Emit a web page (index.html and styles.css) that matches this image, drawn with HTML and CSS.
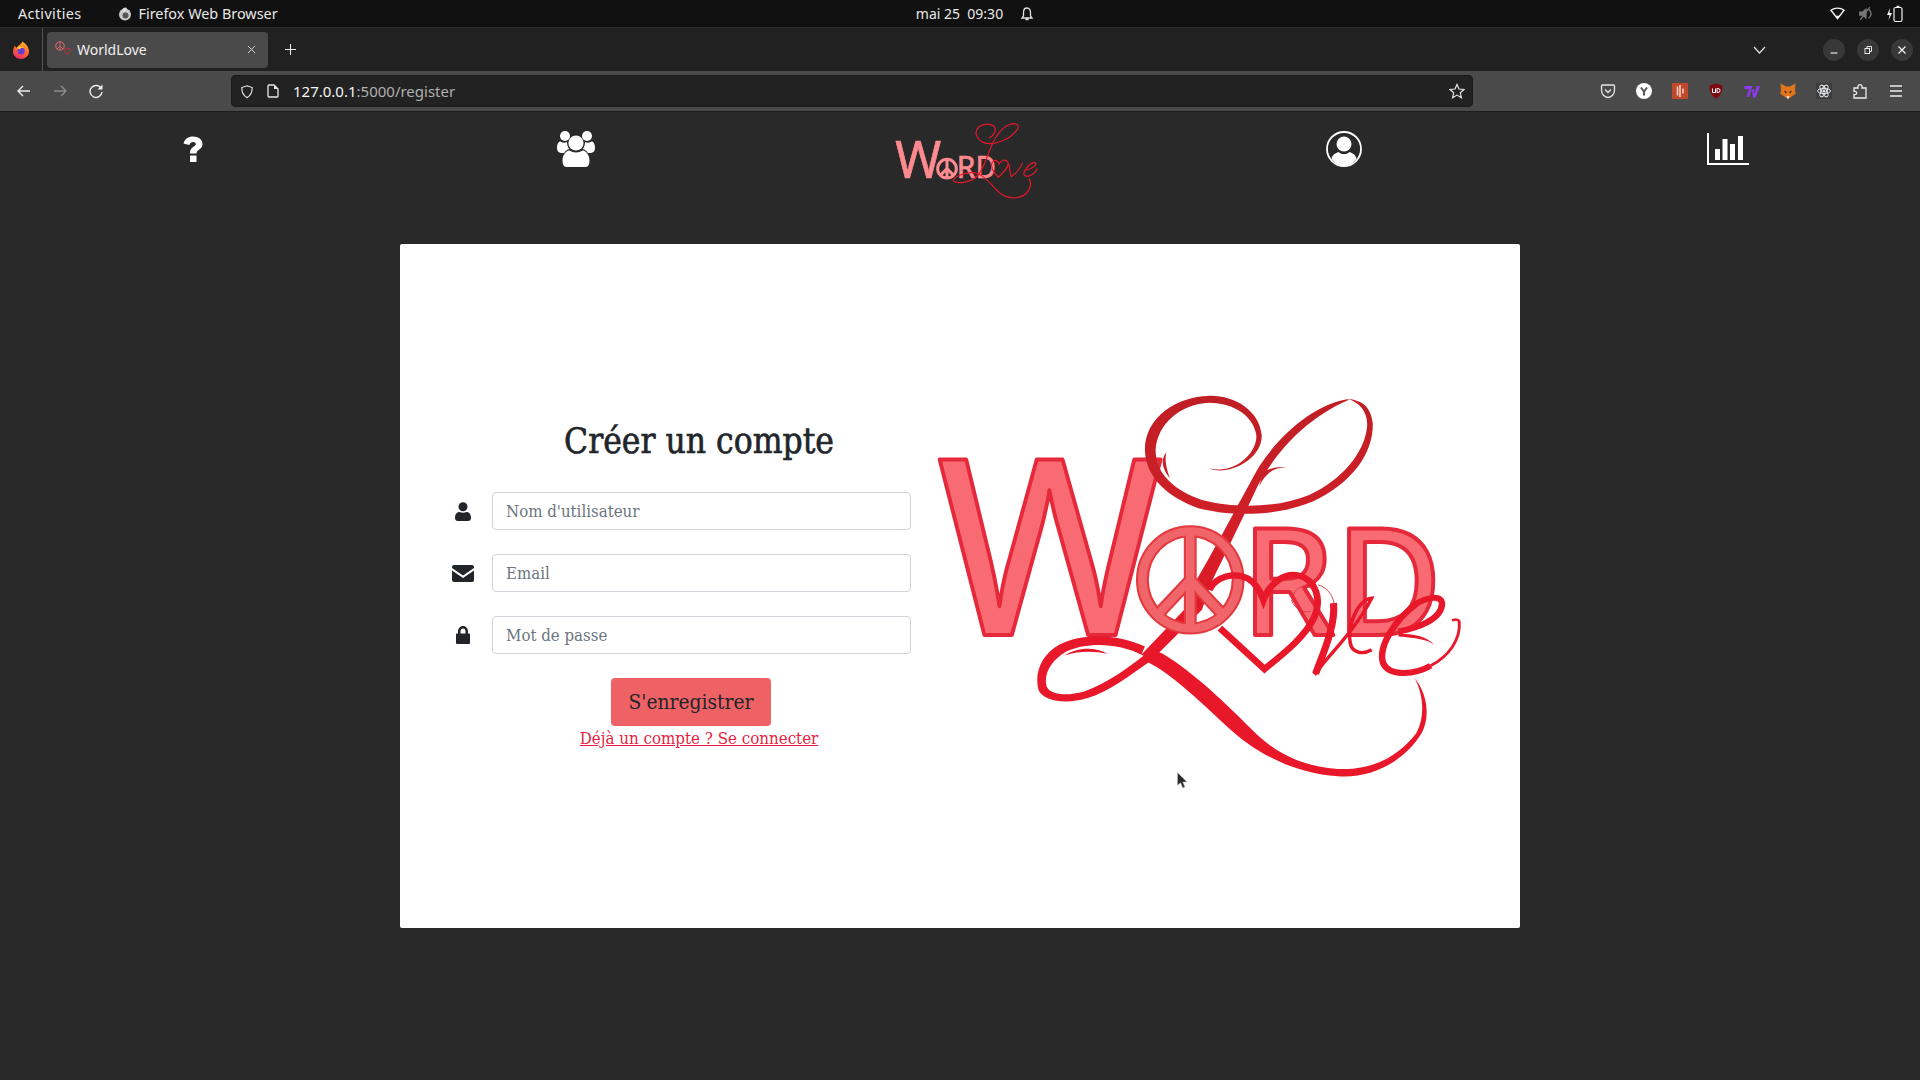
FILE: index.html
```html
<!DOCTYPE html>
<html lang="fr">
<head>
<meta charset="utf-8">
<title>WorldLove</title>
<link rel="stylesheet" href="styles.css">
</head>
<body>
<header class="os-bar">
  <div class="os-left">
    <span class="os-activities">Activities</span>
    <span class="os-app">
      <svg class="os-fox" viewBox="0 0 14 14"><circle cx="7" cy="7.5" r="6" fill="#c9c9c9"/><circle cx="7.5" cy="8.5" r="3" fill="#555"/><path d="M4 3 C6 0 8 0 9 2 L6 5Z" fill="#ddd"/></svg>
      Firefox Web Browser
    </span>
  </div>
  <div class="os-clock">
    <span>mai 25&nbsp; 09:30</span>
    <svg class="os-bell" viewBox="0 0 14 16"><path d="M7 2 C4.5 2 3.5 4 3.5 6.5 V10 L2 12 H12 L10.5 10 V6.5 C10.5 4 9.5 2 7 2Z M5.5 13.5 H8.5" fill="none" stroke="#e0e0e0" stroke-width="1.3"/></svg>
  </div>
  <div class="os-tray">
    <svg class="tray-w" viewBox="0 0 16 16"><path d="M1 4.5 C5 1.5 11 1.5 15 4.5 L8 13.5Z" fill="none" stroke="#f2f2f2" stroke-width="1.5"/><path d="M6 10.5 L8 13.5 L10 10.5Z" fill="#f2f2f2"/></svg>
    <svg class="tray-s" viewBox="0 0 16 16"><path d="M2 6 H5 L9 2.5 V13.5 L5 10 H2Z" fill="#777"/><path d="M11 4 C14 6.5 14 10 11 12.5 M3 14 L12 2" fill="none" stroke="#777" stroke-width="1.3"/></svg>
    <svg class="tray-b" viewBox="0 0 18 18"><path d="M4 3 L1 10 H3.5 L2.5 15 L6 8 H3.5Z" fill="#f2f2f2"/><rect x="8" y="2.5" width="8" height="14" rx="1.5" fill="none" stroke="#f2f2f2" stroke-width="1.2"/><rect x="10.5" y="0.8" width="3" height="1.7" fill="#f2f2f2"/></svg>
  </div>
</header>

<div class="tabs-bar">
  <div class="ff-slot">
    <svg class="ff-logo" viewBox="0 0 16 18">
      <defs><linearGradient id="ffg" x1="0.7" y1="0" x2="0.3" y2="1"><stop offset="0" stop-color="#ffb02e"/><stop offset=".5" stop-color="#ff6a2a"/><stop offset="1" stop-color="#ee2a6c"/></linearGradient></defs>
      <path d="M9.5 0.5 C13 3 16 6 16 10.5 C16 14.8 12.5 18 8 18 C3.5 18 0 14.8 0 10.5 C0 8 1 6 2 4.8 C2.5 6 3 6.5 3.8 6.8 C5 4 7.5 4 9.5 0.5Z" fill="url(#ffg)"/>
      <circle cx="8.2" cy="10" r="3.6" fill="#6a3ddb"/>
      <path d="M4 6.5 C6 5 9 5 11 6.8 C9 6.3 7 7 7 8.3 C5.5 8 4.5 7.5 4 6.5Z" fill="#ffcf3a"/>
    </svg>
  </div>
  <div class="tab">
    <svg class="tab-fav" viewBox="0 0 17 14"><circle cx="5" cy="5" r="4.2" fill="none" stroke="#e86b72" stroke-width="1"/><path d="M5 1 V9 M5 5 L2 8 M5 5 L8 8" stroke="#e86b72" stroke-width=".8"/><path d="M9 9 C9 7 11.2 7 12 8.6 C12.8 7 15.5 7 15.5 9 C15.5 11 13 12.5 12 13.5 C11 12.5 9 11 9 9Z" fill="none" stroke="#d5303a" stroke-width=".9"/></svg>
    <span class="tab-title">WorldLove</span>
    <svg class="tab-x" viewBox="0 0 10 10"><path d="M1 1 L9 9 M9 1 L1 9" stroke="#ddd" stroke-width="1"/></svg>
  </div>
  <svg class="new-tab" viewBox="0 0 12 12"><path d="M6 0 V12 M0 6 H12" stroke="#e8e8e8" stroke-width="1.2"/></svg>
  <div class="tabs-spacer"></div>
  <svg class="tab-list" viewBox="0 0 13 8"><path d="M1 1 L6.5 7 L12 1" fill="none" stroke="#e0e0e0" stroke-width="1.2"/></svg>
  <div class="win-btns">
    <span class="win-btn"><svg viewBox="0 0 10 10"><path d="M1.5 8 H8.5" stroke="#e8e8e8" stroke-width="1.2"/></svg></span>
    <span class="win-btn"><svg viewBox="0 0 10 10"><rect x="2" y="3.5" width="4.5" height="5" fill="none" stroke="#e8e8e8"/><path d="M4 3 V1.5 H8.5 V6.5 H7" fill="none" stroke="#e8e8e8"/></svg></span>
    <span class="win-btn"><svg viewBox="0 0 10 10"><path d="M1.5 1.5 L8.5 8.5 M8.5 1.5 L1.5 8.5" stroke="#f2f2f2" stroke-width="1.2"/></svg></span>
  </div>
</div>

<div class="nav-bar">
  <div class="nav-arrows">
    <svg class="tb-i" viewBox="0 0 16 16"><path d="M14 8 H2 M7 3 L2 8 L7 13" fill="none" stroke="#efefef" stroke-width="1.4"/></svg>
    <svg class="tb-i" viewBox="0 0 16 16"><path d="M2 8 H14 M9 3 L14 8 L9 13" fill="none" stroke="#8c8c8c" stroke-width="1.4"/></svg>
    <svg class="tb-i" viewBox="0 0 16 16"><path d="M13.5 6 A6 6 0 1 0 14 9" fill="none" stroke="#efefef" stroke-width="1.4"/><path d="M14.5 1.5 V6.5 H9.5Z" fill="#efefef"/></svg>
  </div>
  <div class="url-bar">
    <svg class="url-i" viewBox="0 0 16 16"><path d="M8 1.5 L14 3.5 C14 9 12 13 8 15 C4 13 2 9 2 3.5Z" fill="none" stroke="#e8e8e8" stroke-width="1.3"/></svg>
    <svg class="url-page" viewBox="0 0 12 14"><path d="M1 2 Q1 1 2 1 H7 L11 5 V12 Q11 13 10 13 H2 Q1 13 1 12Z" fill="none" stroke="#e8e8e8" stroke-width="1.3"/><path d="M7 1 V5 H11Z" fill="#e8e8e8"/></svg>
    <span class="url-text"><b>127.0.0.1</b>:5000/register</span>
    <svg class="url-star" viewBox="0 0 16 16"><path d="M8 1.5 L10 6 L15 6.5 L11.3 9.8 L12.4 14.7 L8 12.1 L3.6 14.7 L4.7 9.8 L1 6.5 L6 6Z" fill="none" stroke="#e8e8e8" stroke-width="1.2"/></svg>
  </div>
  <div class="ext-row">
    <svg class="ext" viewBox="0 0 16 16"><path d="M1.5 3 Q1.5 2 2.5 2 H13.5 Q14.5 2 14.5 3 V7 C14.5 11 11.5 14.5 8 14.5 C4.5 14.5 1.5 11 1.5 7Z" fill="none" stroke="#e8e8e8" stroke-width="1.3"/><path d="M5 6.5 L8 9.5 L11 6.5" fill="none" stroke="#e8e8e8" stroke-width="1.3"/></svg>
    <svg class="ext" viewBox="0 0 16 16"><circle cx="8" cy="8" r="8" fill="#fff"/><path d="M5 4.5 L8 8.5 L11 4.5 M8 8.5 V12.5" fill="none" stroke="#555" stroke-width="2"/></svg>
    <svg class="ext" viewBox="0 0 16 16"><rect width="16" height="16" rx="1" fill="#c2482b"/><path d="M5.5 3.5 V12.5 M8 2 V14 M11 5.5 V10.5" stroke="#f4d8cf" stroke-width="1.5"/></svg>
    <svg class="ext" viewBox="0 0 16 16"><path d="M8 0.5 L14.5 2.5 C14.5 9 12.5 13 8 15.5 C3.5 13 1.5 9 1.5 2.5Z" fill="#7e0a10"/><path d="M4.5 5.5 V9.5 H7.5 V5.5 M9 5.5 V9.5 H10 Q12 9.5 12 7.5 Q12 5.5 10 5.5Z" fill="none" stroke="#fff" stroke-width="1"/></svg>
    <svg class="ext" viewBox="0 0 16 16"><path d="M0 3 H8.5 L5 14 H2.5 L5 6 H1Z M8 6.5 H10 L10.8 11 L12.5 3 H16 L11.5 14.5 H9Z" fill="#8a3cf0"/></svg>
    <svg class="ext" viewBox="0 0 16 16"><path d="M0.5 0.5 L6 3.5 H10 L15.5 0.5 L15 7 L15.8 10.5 L11 14 L8 16 L5 14 L0.2 10.5 L1 7Z" fill="#e2761b"/><path d="M4 7.5 L7 9 L5.5 10.5Z M12 7.5 L9 9 L10.5 10.5Z" fill="#3a2a20"/><path d="M6.5 13 H9.5 L8.8 15.5 H7.2Z" fill="#e4dcd2"/></svg>
    <svg class="ext" viewBox="0 0 16 16"><rect width="16" height="16" fill="#3c3c3c"/><ellipse cx="8" cy="8" rx="6.5" ry="2.6" fill="none" stroke="#e0eaf2"/><ellipse cx="8" cy="8" rx="6.5" ry="2.6" fill="none" stroke="#e0eaf2" transform="rotate(60 8 8)"/><ellipse cx="8" cy="8" rx="6.5" ry="2.6" fill="none" stroke="#e0eaf2" transform="rotate(120 8 8)"/><circle cx="8" cy="8" r="1.5" fill="#e0eaf2"/></svg>
    <svg class="ext" viewBox="0 0 16 16"><path d="M2 5 H6 C5 0.5 11 0.5 10 5 H14 V15 H2 V11.5 C5.5 12.5 5.5 7.5 2 8.5Z" fill="none" stroke="#eee" stroke-width="1.3"/></svg>
    <svg class="ext" viewBox="0 0 16 16"><path d="M2 3 H14 M2 8 H14 M2 13 H14" stroke="#eee" stroke-width="1.4"/></svg>
  </div>
</div>

<main class="page">
  <nav class="site-nav">
    <a class="site-link link-help">
      <svg class="nav-help" viewBox="0 0 20 26"><path d="M0.5 7.5 C1.5 3 5.5 0.5 10 0.5 C15.5 0.5 19.5 3.5 19.5 8 C19.5 11.5 17 13 15 14.5 C14 15.2 13.5 16 13.5 17.5 H7 C7 13.5 8.5 12 10.5 10.7 C12 9.7 12.8 9 12.8 8 C12.8 6.8 11.7 6 10 6 C8.3 6 7 7 6.3 9Z M7 19.5 H13.5 V26 H7Z" fill="#fff"/></svg>
    </a>
    <a class="site-link link-team">
      <svg class="nav-team" viewBox="0 0 38 36"><circle cx="8" cy="5" r="5" fill="#fff"/><circle cx="30" cy="5" r="5" fill="#fff"/><path d="M0 17 C0 13 1.5 10.5 3.5 10.5 C6 12 8 12 10 11 C10 14 11 17 12.5 18 C10 18.5 8.5 20 7 22 C2 22.5 0 20.5 0 17Z M38 17 C38 13 36.5 10.5 34.5 10.5 C32 12 30 12 28 11 C28 14 27 17 25.5 18 C28 18.5 29.5 20 31 22 C36 22.5 38 20.5 38 17Z" fill="#fff"/><circle cx="19" cy="12" r="7.6" fill="#fff"/><path d="M5.5 30 C5.5 24 8.5 20 12.5 19.5 C16 22 22 22 25.5 19.5 C29.5 20 32.5 24 32.5 30 C32.5 34 31 36 28 36 H10 C7 36 5.5 34 5.5 30Z" fill="#fff"/></svg>
    </a>
    <a class="site-logo">
      <svg class="logo-small" viewBox="100 30 432 234" preserveAspectRatio="none">
        <text class="word-nav" x="104" y="198" font-size="154" textLength="138" lengthAdjust="spacingAndGlyphs">W</text>
        <text class="word-nav" x="288" y="198" font-size="92" textLength="56" lengthAdjust="spacingAndGlyphs">R</text>
        <text class="word-nav" x="345" y="198" font-size="92" textLength="60" lengthAdjust="spacingAndGlyphs">D</text>
        <g class="sn-peace"><circle cx="259" cy="170" r="28"/><path d="M259 142 V198 M259 170 L239 190 M259 170 L279 190"/></g>
        <path class="sn-line" d="M385 78 C398 72 408 58 402 45 C392 33 368 34 354 45 C340 58 345 82 370 92 C400 102 450 82 470 52 C478 38 465 30 445 38 C420 48 400 80 385 120 C378 140 365 175 350 192 C330 212 292 216 279 208 C274 196 310 180 340 182 C372 186 392 222 420 245 C450 264 498 264 509 222 C511 212 508 205 505 200"/>
        <path class="sn-line" d="M413 196 C395 177 388 162 395 150 C402 141 412 146 415 156 C420 144 434 140 441 150 C448 162 430 180 413 196Z"/>
        <path class="sn-line" d="M443 154 C450 166 446 184 452 194 C466 184 480 168 486 152 M490 176 C505 172 526 166 526 155 C520 145 500 160 490 180 C485 200 516 196 530 170"/>
      </svg>
    </a>
    <a class="site-link link-user">
      <svg class="nav-user" viewBox="0 0 36 36"><circle cx="18" cy="18" r="17" fill="none" stroke="#fff" stroke-width="1.8"/><circle cx="18" cy="13" r="7.5" fill="#fff"/><path d="M5.5 28 C6 24 9 22.5 12.5 21 C16 24 20 24 23.5 21 C27 22.5 30 24 30.5 28 C27 32.5 22.5 35 18 35 C13.5 35 9 32.5 5.5 28Z" fill="#fff"/></svg>
    </a>
    <a class="site-link link-chart">
      <svg class="nav-chart" viewBox="0 0 42 32"><path d="M1 0 V31 H42" fill="none" stroke="#fff" stroke-width="2"/><rect x="8" y="16" width="5" height="11" fill="#fff"/><rect x="15.5" y="6" width="5" height="21" fill="#fff"/><rect x="23" y="11" width="5" height="16" fill="#fff"/><rect x="31" y="3" width="5" height="24" fill="#fff"/></svg>
    </a>
  </nav>

  <section class="card">
    <div class="form-col">
      <h1 class="form-title">Créer un compte</h1>
      <form class="form">
        <div class="field">
          <span class="field-icon"><svg class="fi-user" viewBox="0 0 16 19"><circle cx="8" cy="4.7" r="4.5"/><path d="M0 16 C0 12 2 10 4.5 10 C6.5 11 9.5 11 11.5 10 C14 10 16 12 16 16 C16 18 15 19 13 19 H3 C1 19 0 18 0 16Z"/></svg></span>
          <input class="input" type="text" placeholder="Nom d'utilisateur">
        </div>
        <div class="field">
          <span class="field-icon"><svg class="fi-mail" viewBox="0 0 22 17"><path d="M2 0 H20 Q22 0 22 2 V3 L11 10.5 L0 3 V2 Q0 0 2 0Z M0 5.5 L11 13 L22 5.5 V15 Q22 17 20 17 H2 Q0 17 0 15Z"/></svg></span>
          <input class="input" type="email" placeholder="Email">
        </div>
        <div class="field">
          <span class="field-icon"><svg class="fi-lock" viewBox="0 0 14 18"><path fill-rule="evenodd" d="M7 0 C10 0 12 2.5 12 5.5 V7.5 H13 Q14 7.5 14 8.5 V17 Q14 18 13 18 H1 Q0 18 0 17 V8.5 Q0 7.5 1 7.5 H2 V5.5 C2 2.5 4 0 7 0Z M4.5 7.5 H9.5 V5.5 C9.5 3.8 8.5 2.5 7 2.5 C5.5 2.5 4.5 3.8 4.5 5.5Z"/></svg></span>
          <input class="input" type="password" placeholder="Mot de passe">
        </div>
        <button class="submit" type="button">S'enregistrer</button>
      </form>
      <a class="login-link">Déjà un compte ? Se connecter</a>
    </div>
    <div class="art-col">
      <svg class="logo-large" viewBox="48 45 1467 1147" preserveAspectRatio="none">
        <defs>
          <linearGradient id="redg" gradientUnits="userSpaceOnUse" x1="0" y1="50" x2="0" y2="800">
            <stop offset="0" stop-color="#bf1e24"/><stop offset=".45" stop-color="#cf1f27"/><stop offset="1" stop-color="#e8172a"/>
          </linearGradient>
        </defs>
        <text class="word-big" x="50" y="766" font-size="740" textLength="630" lengthAdjust="spacingAndGlyphs">W</text>
        <text class="word-big" x="900" y="766" font-size="445" textLength="262" lengthAdjust="spacingAndGlyphs">R</text>
        <text class="word-big" x="1164" y="766" font-size="445" textLength="298" lengthAdjust="spacingAndGlyphs">D</text>

        <path class="sw-grad" d="M810 265 C860 290 960 240 957 165 C950 90 880 45 810 47 C720 50 630 110 630 210 C632 290 690 350 780 385 C870 410 1000 410 1100 365 C1210 310 1270 220 1268 130 C1262 80 1240 62 1200 57 C1235 70 1255 100 1252 140 C1245 220 1180 300 1090 345 C1000 385 880 385 790 360 C710 330 660 280 660 210 C665 130 730 72 810 68 C880 68 935 110 942 165 C945 220 880 285 810 265Z"/>
        <path class="sw-grad" d="M1200 57 C1110 70 1010 160 950 260 C910 335 860 440 775 600 L740 690 L620 825 L650 840 L790 690 L815 610 C870 490 910 400 945 320 C990 230 1070 120 1200 60Z"/>
        <path class="sw-grad" d="M1030 262 C985 262 965 285 950 320 L960 280 C975 265 1000 258 1030 262Z"/>
        <path class="sw-grad" d="M690 218 C672 240 680 270 700 295 C690 265 685 240 690 218Z"/>

        <path class="sw-red" d="M630 800 C560 765 460 755 390 795 C340 825 320 880 332 930 C345 965 410 975 470 955 C530 935 590 885 640 848 C700 880 770 950 860 1040 C930 1110 1030 1178 1170 1190 C1270 1198 1360 1140 1405 1060 C1430 1010 1420 940 1385 895 C1410 945 1415 1010 1390 1060 C1340 1130 1270 1172 1170 1168 C1060 1160 985 1110 930 1050 C860 975 770 880 680 822 L650 808 C590 860 520 915 460 935 C410 950 365 945 355 920 C345 880 370 840 410 815 C470 785 560 790 620 825Z"/>
        <path class="sw-red" d="M525 822 C490 800 440 802 405 827 C450 812 490 815 525 822Z"/>

        <g class="peace-outer"><ellipse cx="757" cy="600" rx="134" ry="146"/><path d="M757 460 V755 M757 600 L668 702 M757 600 L846 702"/></g>
        <g class="peace-inner"><ellipse cx="757" cy="600" rx="134" ry="146"/><path d="M757 460 V755 M757 600 L668 702 M757 600 L846 702"/></g>

        <path class="ln-heart" d="M810 630 C830 590 880 575 920 597 C940 610 955 640 962 660 C980 610 1020 578 1060 587 C1110 600 1125 660 1105 710 C1080 770 1020 820 965 868 L840 745"/>

        <path class="ln-hair" d="M1045 650 C1050 620 1080 610 1100 630 M1040 660 C1050 690 1075 700 1092 695 M1115 615 C1145 625 1160 650 1162 690"/>
        <path class="ln-v" d="M1108 882 C1125 830 1165 740 1158 670"/>
        <path class="ln-v2" d="M1105 885 L1130 850 C1170 800 1230 730 1265 655 C1225 660 1195 740 1205 790 C1210 820 1240 825 1265 810"/>
        <path class="ln-e" d="M1340 755 C1390 745 1462 720 1462 670 C1458 645 1420 652 1390 672 C1330 720 1282 800 1297 850 C1312 888 1380 888 1430 858"/>
        <path class="ln-e2" d="M1430 858 C1480 830 1515 780 1510 725 C1505 715 1490 722 1490 722"/>
        <path class="sw-red" d="M1340 762 C1380 762 1420 770 1440 795 C1420 778 1390 775 1340 770Z"/>
      </svg>
      <svg class="cursor" viewBox="0 0 11 17"><path d="M0.5 0.5 V13.5 L3.5 10.8 L5.8 16 L8 15 L5.8 10 H10Z" fill="#2a2a2a" stroke="#ccc" stroke-width=".5"/></svg>
    </div>
  </section>
</main>
</body>
</html>
```

FILE: styles.css
```css
* { box-sizing: border-box; }
html, body { margin: 0; height: 100%; }
body {
  width: 1920px;
  height: 1080px;
  overflow: hidden;
  display: flex;
  flex-direction: column;
  background: #292929;
  font-family: "Noto Sans", sans-serif;
}

/* OS top bar */
.os-bar {
  flex: 0 0 27px;
  display: grid;
  grid-template-columns: 1fr auto 1fr;
  align-items: center;
  padding: 0 16px 0 18px;
  background: #111;
  color: #e8e8e8;
  font-size: 14.4px;
}
.os-left { display: flex; gap: 37px; align-items: center; }
.os-activities { letter-spacing: .35px; }
.os-app { display: flex; align-items: center; gap: 6px; }
.os-fox { width: 14px; height: 14px; }
.os-clock { display: flex; align-items: center; gap: 17px; padding-left: 28px; font-size: 14px; }
.os-bell { width: 14px; height: 16px; }
.os-tray { display: flex; justify-content: flex-end; align-items: center; gap: 12px; }
.tray-w { width: 15px; height: 15px; }
.tray-s { width: 17px; height: 17px; }
.tray-b { width: 18px; height: 18px; }

/* Tabs */
.tabs-bar {
  flex: 0 0 44px;
  display: flex;
  align-items: center;
  background: #212121;
  border-top: 1px solid #2a2a2a;
}
.ff-slot {
  width: 43px;
  height: 100%;
  display: flex;
  align-items: center;
  justify-content: center;
  border-right: 1px solid #555;
}
.ff-logo { width: 16px; height: 18px; }
.tab {
  margin-left: 4px;
  width: 221px;
  height: 36px;
  display: flex;
  align-items: center;
  padding: 0 12px 0 8px;
  background: #4a4a4a;
  border-radius: 4px;
  color: #f0f0f0;
  font-size: 14px;
}
.tab-fav { width: 17px; height: 14px; margin-bottom: 4px; }
.tab-title { flex: 1; padding-left: 5px; }
.tab-x { width: 9px; height: 9px; }
.new-tab { width: 11px; height: 11px; margin-left: 17px; }
.tabs-spacer { flex: 1; }
.tab-list { width: 13px; height: 8px; margin-right: 57px; }
.win-btns { display: flex; gap: 12px; padding-right: 7px; }
.win-btn {
  width: 22px;
  height: 22px;
  display: flex;
  align-items: center;
  justify-content: center;
  background: #383838;
  border-radius: 50%;
}
.win-btn svg { width: 10px; height: 10px; }

/* Toolbar */
.nav-bar {
  flex: 0 0 41px;
  display: flex;
  align-items: center;
  background: #4a4a4a;
  border-bottom: 1px solid #1c1c1c;
}
.nav-arrows { display: flex; gap: 20px; padding-left: 16px; width: 231px; }
.tb-i { width: 16px; height: 16px; }
.url-bar {
  width: 1242px;
  height: 32px;
  display: flex;
  align-items: center;
  padding: 0 7px 0 8px;
  background: #222;
  border: 1px solid #1a1a1a;
  border-radius: 4px;
  color: #b0b0b0;
  font-size: 15px;
}
.url-i { width: 14px; height: 15px; }
.url-page { width: 12px; height: 14px; margin-left: 13px; }
.url-text { flex: 1; padding-left: 14px; }
.url-text b { font-weight: 400; color: #f4f4f4; }
.url-star { width: 16px; height: 16px; }
.ext-row {
  display: flex;
  gap: 20px;
  padding-left: 127px;
  align-items: center;
}
.ext { width: 16px; height: 16px; }

/* Page */
.page { flex: 1; display: flex; flex-direction: column; align-items: center; }
.site-nav {
  width: 100%;
  height: 132px;
  display: grid;
  grid-template-columns: repeat(5, 384px);
  justify-items: center;
  align-items: start;
}
.site-link { display: block; line-height: 0; }
.link-help { padding-top: 24px; padding-left: 2px; }
.link-team { padding-top: 19px; }
.link-user { padding-top: 19px; }
.link-chart { padding-top: 21px; }
.site-logo { display: block; line-height: 0; padding-top: 10px; margin-left: 12px; }
.nav-help { width: 20px; height: 26px; }
.nav-team { width: 38px; height: 36px; }
.nav-user { width: 36px; height: 36px; }
.nav-chart { width: 42px; height: 32px; }
.logo-small { width: 144px; height: 78px; }

.card {
  width: 1120px;
  height: 684px;
  background: #fff;
  border-radius: 2px;
  display: flex;
}
.form-col {
  width: 540px;
  padding: 176px 0 0 32px;
  display: flex;
  flex-direction: column;
  color: #212529;
}
.form-title {
  margin: 0 0 30px 26px;
  font-family: "DejaVu Serif Condensed", "DejaVu Serif", serif;
  font-weight: 400;
  -webkit-text-stroke: 0.6px #212529;
  font-size: 35px;
  line-height: 42px;
  text-align: center;
}
.form { display: flex; flex-direction: column; gap: 24px; align-items: stretch; }
.field { display: flex; align-items: center; height: 38px; }
.field-icon { width: 62px; margin-right: -2px; display: flex; justify-content: center; fill: #212529; }
.fi-user { width: 16px; height: 19px; }
.fi-mail { width: 22px; height: 17px; }
.fi-lock { width: 14px; height: 18px; }
.input {
  flex: 0 0 419px;
  height: 38px;
  padding: 6px 13px;
  border: 1px solid #ced4da;
  border-radius: 4px;
  font-family: "DejaVu Serif Condensed", "DejaVu Serif", serif;
  font-size: 16.7px;
}
.input::placeholder { color: #6c757d; opacity: 1; }
.submit {
  align-self: flex-start;
  margin-left: 179px;
  width: 160px;
  height: 48px;
  border: 0;
  border-radius: 4px;
  background: #ee6165;
  color: #212529;
  font-family: "DejaVu Serif Condensed", "DejaVu Serif", serif;
  font-size: 20.8px;
}
.login-link {
  margin: 2px 0 0 26px;
  text-align: center;
  color: #e51f42;
  text-decoration: underline;
  font-family: "DejaVu Serif Condensed", "DejaVu Serif", serif;
  font-size: 16.8px;
  line-height: 20px;
}
.art-col { position: relative; flex: 1; }
.logo-large { width: 524px; height: 382px; margin: 151px 0 0 -3px; display: block; overflow: visible; }
.cursor { position: absolute; left: 237px; top: 528px; width: 11px; height: 17px; }

/* Logo */
.word-big {
  font-family: "Noto Sans", sans-serif;
  font-weight: 500;
  fill: #f96b72;
  stroke: #e5283a;
  stroke-width: 12px;
  stroke-linejoin: round;
}
.word-nav {
  font-family: "Noto Sans", sans-serif;
  fill: #ff8a90;
  stroke: #ff8a90;
  stroke-width: 2px;
}
.sw-grad { fill: url(#redg); }
.sw-red { fill: #e8172a; }
.peace-outer { fill: none; stroke: #e4393f; stroke-width: 36; }
.peace-inner { fill: none; stroke: #f0656a; stroke-width: 24; }
.ln-heart { fill: none; stroke: #e8172a; stroke-width: 19; }
.ln-hair { fill: none; stroke: #d8303a; stroke-width: 2.5; }
.ln-v { fill: none; stroke: #e8172a; stroke-width: 20; }
.ln-v2 { fill: none; stroke: #e8172a; stroke-width: 10; }
.ln-e { fill: none; stroke: #e8172a; stroke-width: 18; }
.ln-e2 { fill: none; stroke: #e8172a; stroke-width: 8; }
.sn-peace { fill: none; stroke: #ff8a90; stroke-width: 9; }
.sn-line { fill: none; stroke: #e8172a; stroke-width: 3.5; }
```
